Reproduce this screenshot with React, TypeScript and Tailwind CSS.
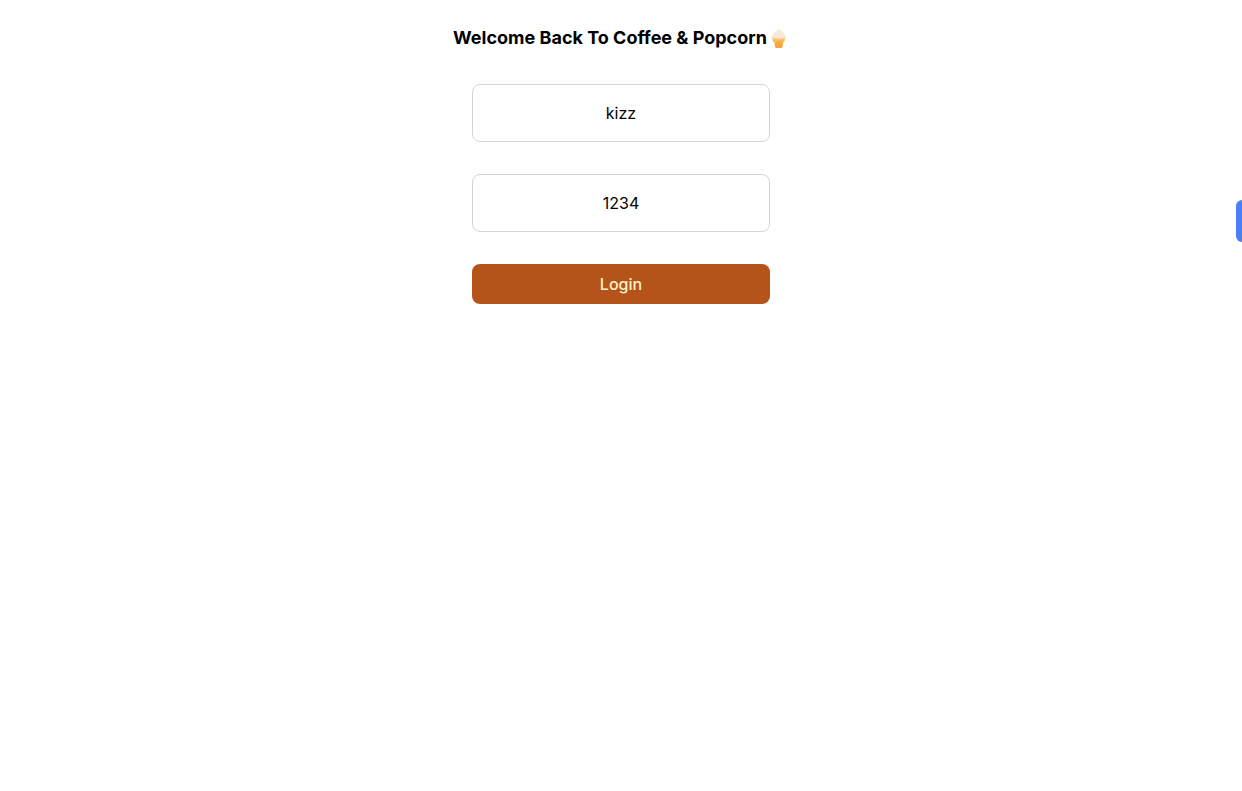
function IceCream() {
  return (
    <svg viewBox="0 0 22 22" role="img" aria-label="Soft ice cream" className="size-[22px] shrink-0">
      <defs>
        <linearGradient id="cone" x1="0" y1="0" x2="0" y2="1">
          <stop offset="0" stopColor="#fbd08a" />
          <stop offset="0.4" stopColor="#fbb956" />
          <stop offset="1" stopColor="#f7a32f" />
        </linearGradient>
        <linearGradient id="cream" x1="0" y1="0" x2="0" y2="1">
          <stop offset="0" stopColor="#f9f1e8" />
          <stop offset="1" stopColor="#fae6d2" />
        </linearGradient>
      </defs>
      <path d="M5.1 10 18.3 10 17.6 14Q17.4 15 16.3 15.3L15.4 20.3Q15.2 21 14.3 21H9.2Q8.3 21 8.1 20.3L7.2 15.3Q6 15 5.8 14Z" fill="url(#cone)" />
      <path d="M7.7 15.4H15.8M8 17.8H15.4M10 13.4V20.4M11.8 13.4V20.4M13.6 13.4V20.4" stroke="#e8952c" strokeWidth="0.4" opacity="0.45" />
      <path d="M11.2 0.8C12.8 1.3 14.1 2.4 14 3.9C15.7 4.1 16.5 5.1 16.2 6.3C17.8 6.7 18.7 7.6 18.5 8.9C18.3 10.3 17.1 11 15.2 11.3C12.7 11.8 9.7 11.7 7.6 11.2C5.8 10.8 4.8 10 4.9 8.8C5 7.6 5.9 6.9 7.2 6.6C6.9 5.2 8 4.3 9.6 4C10.7 3.3 11.6 2.4 11.2 0.8Z" fill="url(#cream)" />
      <path d="M7.4 6.8C10 7.5 13.5 7.4 16 6.4M9.8 4.2C11.2 4.6 12.7 4.4 13.9 3.9" fill="none" stroke="#ecdac8" strokeWidth="0.5" />
    </svg>
  );
}

const fieldClass = "w-full rounded-lg border border-gray-300 p-4 text-center";

export default function App() {
  return (
    <main className="relative min-h-screen overflow-hidden bg-white px-4 pt-6 font-['Inter',sans-serif] text-base text-black">
      <h1 className="flex items-center justify-center text-lg font-bold">
        Welcome Back To Coffee &amp; Popcorn
        <IceCream />
      </h1>
      <form
        className="mx-auto mt-8 flex w-full max-w-[298px] flex-col gap-8"
        onSubmit={(event) => event.preventDefault()}
      >
        <input aria-label="Username" defaultValue="kizz" className={fieldClass} />
        <input aria-label="Password" defaultValue="1234" className={fieldClass} />
        <button type="submit" className="w-full rounded-lg bg-[#b4541b] py-2 font-medium text-[#fef3c7]">
          Login
        </button>
      </form>
      <button
        type="button"
        aria-label="Open side panel"
        className="absolute top-[200px] right-0 h-[42px] w-1.5 rounded-l-md bg-[#4a7df8]"
      />
    </main>
  );
}
